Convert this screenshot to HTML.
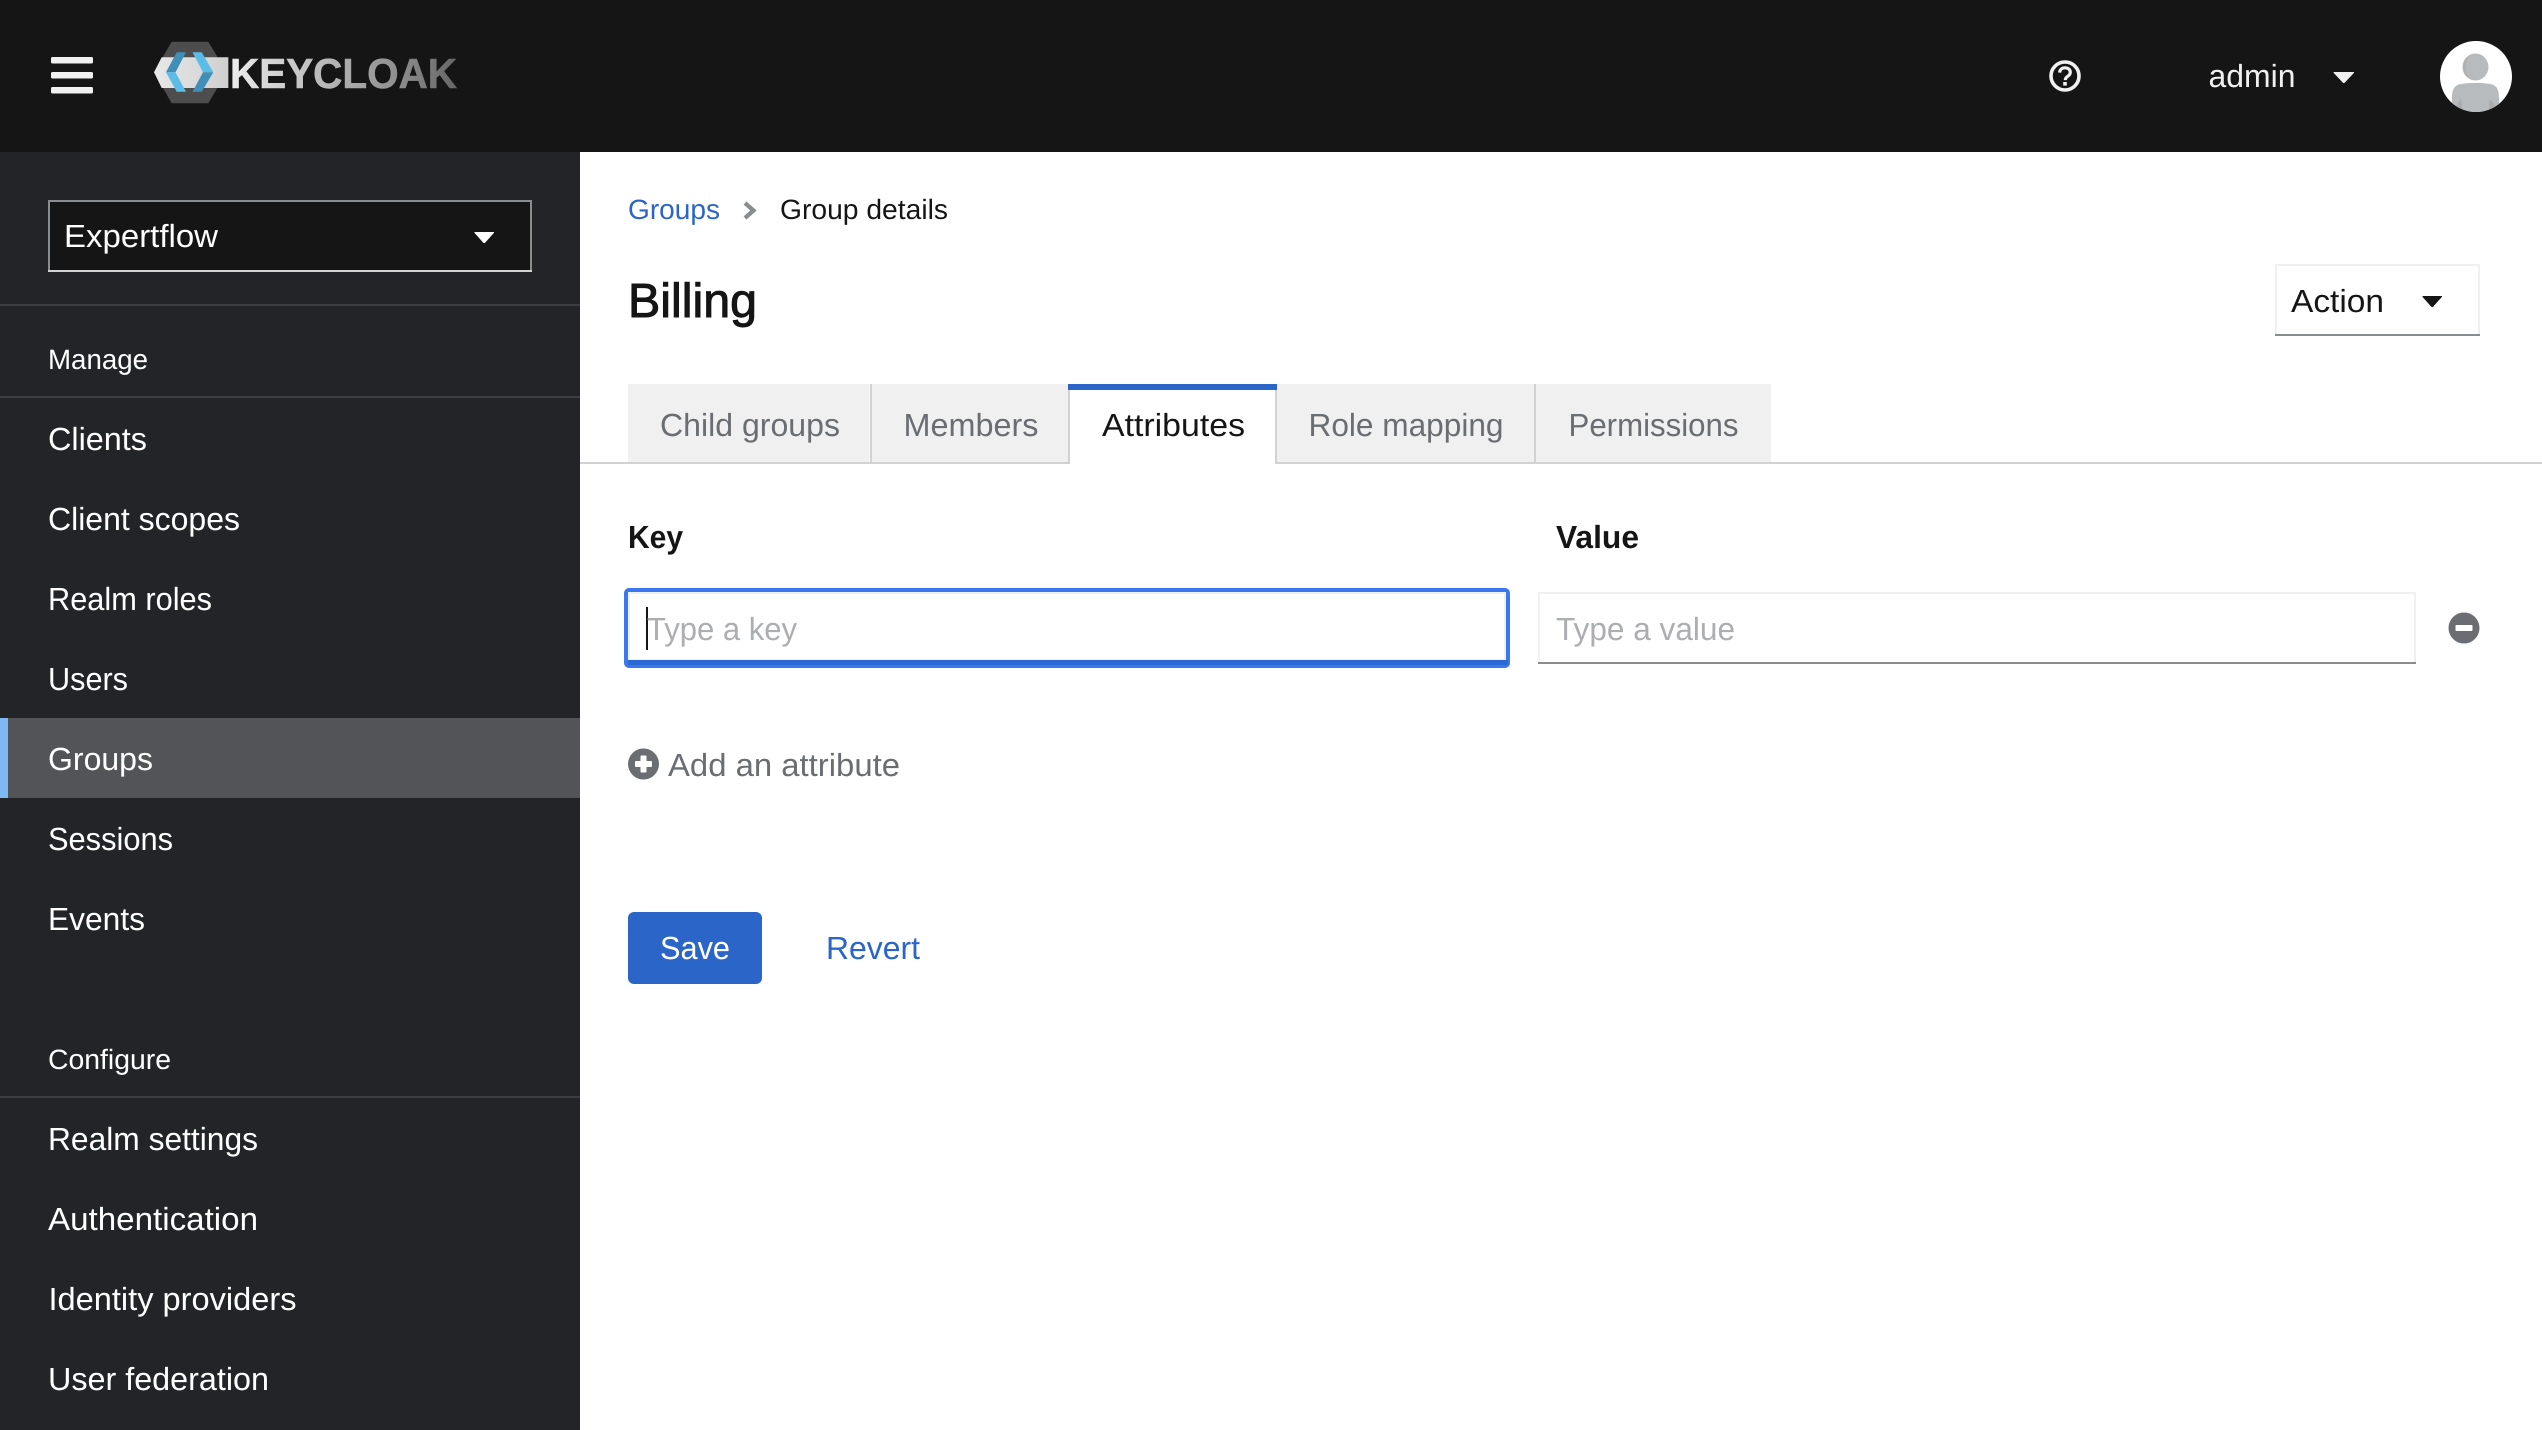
<!DOCTYPE html>
<html lang="en">
<head>
<meta charset="utf-8">
<title>Keycloak - Group details</title>
<style>
html,body{margin:0;padding:0;background:#fff;width:2542px;height:1430px;overflow:hidden}
svg{display:block}
text{font-family:"Liberation Sans",sans-serif;font-size:32px;text-rendering:geometricPrecision}
.nav{fill:#fff;font-size:32px}
.sm{font-size:28px}
.tab{fill:#6a6e73}
.ph{fill:#adaeb1}
</style>
</head>
<body>
<svg width="2542" height="1430" viewBox="0 0 2542 1430" xmlns="http://www.w3.org/2000/svg">
<defs>
<linearGradient id="kc" gradientUnits="userSpaceOnUse" x1="230" y1="0" x2="457" y2="0">
<stop offset="0" stop-color="#ececec"/><stop offset=".45" stop-color="#b4b4b4"/><stop offset=".75" stop-color="#8c8c8c"/><stop offset="1" stop-color="#666"/>
</linearGradient>
<linearGradient id="band" gradientUnits="userSpaceOnUse" x1="154" y1="0" x2="229" y2="0">
<stop offset="0" stop-color="#e8e8e8"/><stop offset="1" stop-color="#cfcfcf"/>
</linearGradient>
<clipPath id="av"><ellipse cx="2476" cy="76.5" rx="36" ry="35.5"/></clipPath>
</defs>

<!-- header -->
<rect x="0" y="0" width="2542" height="152" fill="#151515"/>
<rect x="51" y="57" width="42" height="6.5" rx="1.5" fill="#f0f0f0"/>
<rect x="51" y="72" width="42" height="6.5" rx="1.5" fill="#f0f0f0"/>
<rect x="51" y="87" width="42" height="6.5" rx="1.5" fill="#f0f0f0"/>

<!-- logo -->
<polygon points="171.7,41.7 208.3,41.7 226.7,72.3 208.3,103.3 171.7,103.3 154,72.3" fill="#4d4d4d"/>
<polygon points="154,72.3 161.7,57.3 228.3,57.3 228.3,88 161.7,88" fill="url(#band)"/>
<polygon points="166,72.3 176.7,52.3 186,52.3 175.500,72.3" fill="#3f8fb8"/>
<polygon points="166,72.3 175.500,72.3 186,91.7 176.7,91.7" fill="#5cbce8"/>
<polygon points="192.500,52.3 201.7,52.3 213.300,72.3 203,72.3" fill="#5cbce8"/>
<polygon points="203,72.3 213.300,72.3 201.7,91.7 192.500,91.7" fill="#3f8fb8"/>
<text x="230" y="88" font-weight="700" style="font-size:42px" fill="url(#kc)" stroke="url(#kc)" stroke-width=".6" textLength="227" lengthAdjust="spacingAndGlyphs">KEYCLOAK</text>

<!-- header right -->
<circle cx="2065" cy="76" r="14" fill="none" stroke="#f0f0f0" stroke-width="3.6"/>
<path d="M2059.6 72.6c.2-3 2.5-4.8 5.4-4.8 3 0 5.3 1.8 5.3 4.5 0 2.3-1.4 3.3-2.9 4.3-1.2.8-2 1.4-2 2.9v.6" fill="none" stroke="#f0f0f0" stroke-width="3.2"/>
<rect x="2063.2" y="82" width="3.6" height="3.6" fill="#f0f0f0"/>
<text x="2208.500" y="87" fill="#f0f0f0" textLength="87" lengthAdjust="spacingAndGlyphs">admin</text>
<path d="M2334 72h19.500q1 0 .3 1l-9 9.600q-1 1-2 0l-9-9.600q-.7-1 .2-1z" fill="#f0f0f0"/>
<ellipse cx="2476" cy="76.500" rx="36" ry="35.500" fill="#fff"/>
<g clip-path="url(#av)">
<ellipse cx="2475.500" cy="67" rx="13" ry="13.500" fill="#b8bbbe"/>
<path d="M2471 54.500a13 13.500 0 0 0 0 25a17 17 0 0 1 0-25z" fill="#aeb0b2"/>
<path d="M2452 112v-14c0-8 2-13 9-14 9-1.500 20-1.500 29 0 7 1 9 6 9 14v14z" fill="#b8bbbe"/>
<path d="M2461 99c1 3 1 9 1 13h-7c1-6 3-11 6-13zM2490 99c-1 3-1 9-1 13h7c-1-6-3-11-6-13z" fill="#aaacae"/>
</g>

<!-- sidebar -->
<rect x="0" y="152" width="580" height="1278" fill="#232428"/>
<rect x="49" y="201" width="482" height="70" fill="#151515" stroke="#8a8d90" stroke-width="2"/>
<path d="M48 270h484v2H48z" fill="#d2d2d2"/>
<text x="64" y="247" fill="#fff" textLength="154" lengthAdjust="spacingAndGlyphs">Expertflow</text>
<path d="M475 232h18.500q1 0 .3 1l-8.600 9.600q-1 1-2 0l-8.600-9.600q-.7-1 .4-1z" fill="#fff"/>
<rect x="0" y="304" width="580" height="2" fill="#3d3e42"/>

<text class="nav sm" x="48" y="369" textLength="100" lengthAdjust="spacingAndGlyphs">Manage</text>
<rect x="0" y="396" width="580" height="2" fill="#3d3e42"/>
<text class="nav" x="48" y="450" textLength="99" lengthAdjust="spacingAndGlyphs">Clients</text>
<text class="nav" x="48" y="530" textLength="192" lengthAdjust="spacingAndGlyphs">Client scopes</text>
<text class="nav" x="48" y="610" textLength="164" lengthAdjust="spacingAndGlyphs">Realm roles</text>
<text class="nav" x="48" y="690" textLength="80" lengthAdjust="spacingAndGlyphs">Users</text>
<rect x="0" y="718" width="580" height="80" fill="#535458"/>
<rect x="0" y="718" width="8" height="80" fill="#7fb9f5"/>
<text class="nav" x="48" y="770" textLength="105" lengthAdjust="spacingAndGlyphs">Groups</text>
<text class="nav" x="48" y="850" textLength="125" lengthAdjust="spacingAndGlyphs">Sessions</text>
<text class="nav" x="48" y="930" textLength="97" lengthAdjust="spacingAndGlyphs">Events</text>
<text class="nav sm" x="48" y="1069" textLength="123" lengthAdjust="spacingAndGlyphs">Configure</text>
<rect x="0" y="1096" width="580" height="2" fill="#3d3e42"/>
<text class="nav" x="48" y="1150" textLength="210" lengthAdjust="spacingAndGlyphs">Realm settings</text>
<text class="nav" x="48" y="1230" textLength="210" lengthAdjust="spacingAndGlyphs">Authentication</text>
<text class="nav" x="48.500" y="1310" textLength="248" lengthAdjust="spacingAndGlyphs">Identity providers</text>
<text class="nav" x="48" y="1390" textLength="221" lengthAdjust="spacingAndGlyphs">User federation</text>

<!-- breadcrumb -->
<text class="sm" x="628" y="219" fill="#2b65c8" textLength="92" lengthAdjust="spacingAndGlyphs">Groups</text>
<path d="M745 203l8.500 7.500-8.500 7.500" fill="none" stroke="#8a8d90" stroke-width="4.200"/>
<text class="sm" x="780" y="219" fill="#151515" textLength="168" lengthAdjust="spacingAndGlyphs">Group details</text>

<!-- title -->
<text x="628" y="317" style="font-size:48px" fill="#151515" stroke="#151515" stroke-width="1" textLength="129" lengthAdjust="spacingAndGlyphs">Billing</text>

<!-- action -->
<rect x="2276" y="265" width="203" height="70" fill="#fff" stroke="#f0f0f0" stroke-width="2"/>
<rect x="2275" y="334" width="205" height="2" fill="#8a8d90"/>
<text x="2291" y="312" fill="#151515" textLength="93" lengthAdjust="spacingAndGlyphs">Action</text>
<path d="M2423.500 296h18q1 0 .3 1l-8.600 9.600q-1 1-2 0l-8.600-9.600q-.7-1 .9-1z" fill="#151515"/>

<!-- tabs -->
<rect x="580" y="462" width="1962" height="2" fill="#d2d2d2"/>
<rect x="628" y="384" width="241.500" height="78" fill="#f0f0f0"/>
<rect x="870" y="384" width="2" height="78" fill="#d2d2d2"/>
<rect x="872" y="384" width="196" height="78" fill="#f0f0f0"/>
<rect x="1068" y="384" width="2" height="80" fill="#d2d2d2"/>
<rect x="1070" y="384" width="205" height="80" fill="#fff"/>
<rect x="1275" y="384" width="2" height="80" fill="#d2d2d2"/>
<rect x="1068" y="384" width="209" height="6" fill="#2b65c8"/>
<rect x="1277" y="384" width="257" height="78" fill="#f0f0f0"/>
<rect x="1534" y="384" width="2" height="78" fill="#d2d2d2"/>
<rect x="1536" y="384" width="235" height="78" fill="#f0f0f0"/>
<text class="tab" x="660" y="436" textLength="180" lengthAdjust="spacingAndGlyphs">Child groups</text>
<text class="tab" x="903.500" y="436" textLength="135" lengthAdjust="spacingAndGlyphs">Members</text>
<text x="1102" y="436" fill="#151515" textLength="143" lengthAdjust="spacingAndGlyphs">Attributes</text>
<text class="tab" x="1308.500" y="436" textLength="195" lengthAdjust="spacingAndGlyphs">Role mapping</text>
<text class="tab" x="1568.500" y="436" textLength="170" lengthAdjust="spacingAndGlyphs">Permissions</text>

<!-- table head -->
<text x="628" y="548" font-weight="700" fill="#151515" textLength="55" lengthAdjust="spacingAndGlyphs">Key</text>
<text x="1556" y="548" font-weight="700" fill="#151515" textLength="83" lengthAdjust="spacingAndGlyphs">Value</text>

<!-- key input -->
<rect x="626" y="590" width="882" height="76" rx="3" fill="#fff" stroke="#3a78ee" stroke-width="4"/>
<rect x="629" y="593" width="876" height="67" fill="#fff" stroke="#f0f0f0" stroke-width="2"/>
<rect x="628" y="660" width="880" height="5" fill="#2b69d4"/>
<rect x="646" y="607" width="2" height="43" fill="#151515"/>
<text class="ph" x="647" y="640" textLength="150" lengthAdjust="spacingAndGlyphs">Type a key</text>

<!-- value input -->
<rect x="1539" y="593" width="876" height="70" fill="#fff" stroke="#f0f0f0" stroke-width="2"/>
<rect x="1538" y="662" width="878" height="2" fill="#8a8d90"/>
<text class="ph" x="1556" y="640" textLength="179" lengthAdjust="spacingAndGlyphs">Type a value</text>

<!-- minus icon -->
<circle cx="2464" cy="628" r="15.500" fill="#6a6e73"/>
<rect x="2455.500" y="625" width="17" height="6" rx="1" fill="#fff"/>

<!-- add -->
<circle cx="643.500" cy="764" r="15.500" fill="#6a6e73"/>
<rect x="635" y="761" width="17" height="6" rx="1" fill="#fff"/>
<rect x="640.500" y="755.500" width="6" height="17" rx="1" fill="#fff"/>
<text x="668" y="776" fill="#6a6e73" textLength="232" lengthAdjust="spacingAndGlyphs">Add an attribute</text>

<!-- actions -->
<rect x="628" y="912" width="134" height="72" rx="6" fill="#2b65c8"/>
<text x="660" y="959" fill="#fff" textLength="70" lengthAdjust="spacingAndGlyphs">Save</text>
<text x="826" y="959" fill="#2b65c8" textLength="94" lengthAdjust="spacingAndGlyphs">Revert</text>
</svg>
</body>
</html>
